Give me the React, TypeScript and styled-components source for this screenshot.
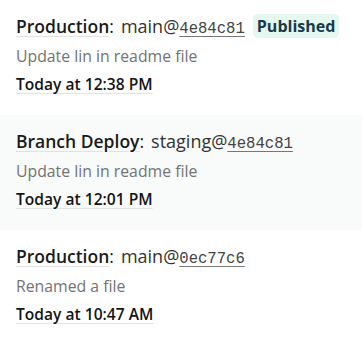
import React from "react";
import styled, { createGlobalStyle } from "styled-components";

const GlobalStyle = createGlobalStyle`
  html, body {
    margin: 0;
    padding: 0;
    background: #ffffff;
  }
  body {
    font-family: "Open Sans", "Noto Sans", sans-serif;
    -webkit-font-smoothing: antialiased;
  }
`;

const List = styled.ul`
  list-style: none;
  margin: 0;
  padding: 0;
  width: 362px;
`;

const Item = styled.li<{ $shaded?: boolean }>`
  display: flex;
  flex-direction: column;
  padding: 11px 16px 18px;
  height: 115px;
  box-sizing: border-box;
  background: ${(p) => (p.$shaded ? "#f9fafa" : "#ffffff")};
`;

const TitleLine = styled.div`
  display: flex;
  align-items: baseline;
  height: 30px;
  line-height: 30px;
  font-size: 18px;
  color: #2b2b2b;
  white-space: nowrap;
`;

const Context = styled.span`
  font-size: 17.5px;
  font-weight: 600;
  color: #1a1a1a;
  text-decoration: underline;
  text-decoration-color: #e2e2e2;
  text-underline-offset: 3px;
`;

const Colon = styled.span`
  font-size: 17.5px;
  color: #1a1a1a;
`;

const Ref = styled.span`
  margin-left: 7px;
  color: #333333;
`;

const Hash = styled.a`
  font-family: "Liberation Mono", "DejaVu Sans Mono", monospace;
  font-size: 15.6px;
  color: #444444;
  text-decoration: underline;
  text-decoration-color: #777777;
  text-underline-offset: 3px;
`;

const Badge = styled.span`
  margin-left: 8px;
  padding: 0 4px;
  height: 24px;
  line-height: 24px;
  align-self: center;
  border-radius: 5px;
  background: #e4f8f0;
  color: #183a4c;
  font-weight: 700;
  font-size: 16px;
`;

const Message = styled.div`
  padding-top: 2px;
  font-size: 15.8px;
  line-height: 27px;
  color: #737373;
`;

const Time = styled.div`
  font-size: 15.6px;
  line-height: 28px;
  font-weight: 600;
  color: #151515;
  span {
    text-decoration: underline;
    text-decoration-color: #e2e2e2;
    text-underline-offset: 3px;
  }
`;

type Deploy = {
  context: string;
  branch: string;
  hash: string;
  message: string;
  time: string;
  published?: boolean;
};

const deploys: Deploy[] = [
  {
    context: "Production",
    branch: "main",
    hash: "4e84c81",
    message: "Update lin in readme file",
    time: "Today at 12:38 PM",
    published: true,
  },
  {
    context: "Branch Deploy",
    branch: "staging",
    hash: "4e84c81",
    message: "Update lin in readme file",
    time: "Today at 12:01 PM",
  },
  {
    context: "Production",
    branch: "main",
    hash: "0ec77c6",
    message: "Renamed a file",
    time: "Today at 10:47 AM",
  },
];

export default function App() {
  return (
    <>
      <GlobalStyle />
      <List>
        {deploys.map((d, i) => (
          <Item key={i} $shaded={i % 2 === 1}>
            <TitleLine>
              <Context>{d.context}</Context>
              <Colon>:</Colon>
              <Ref>
                {d.branch}@<Hash href="#">{d.hash}</Hash>
              </Ref>
              {d.published && <Badge>Published</Badge>}
            </TitleLine>
            <Message>{d.message}</Message>
            <Time>
              <span>{d.time}</span>
            </Time>
          </Item>
        ))}
      </List>
    </>
  );
}
